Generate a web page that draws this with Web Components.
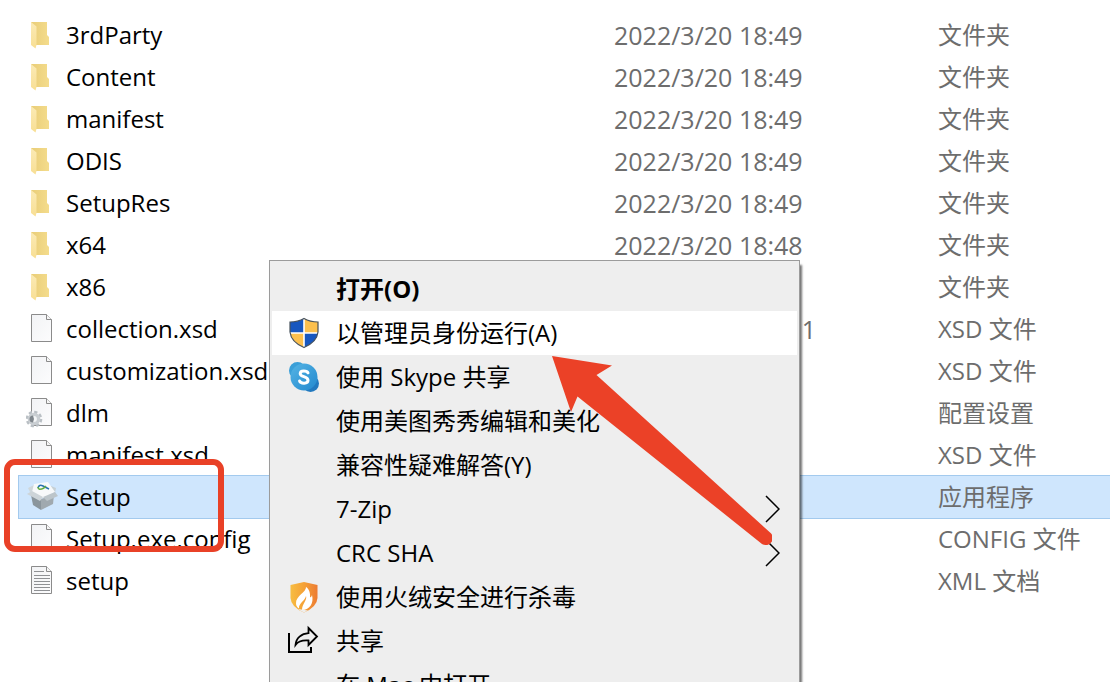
<!DOCTYPE html>
<html lang="zh-CN">
<head>
<meta charset="utf-8">
<title>Setup</title>
<style>
  html, body { margin: 0; height: 100%; }
  body {
    overflow: hidden;
    background: #fff;
    color: #000;
    font: 24px/42px "Open Sans", "Noto Sans CJK SC", sans-serif;
  }
</style>
</head>
<body>
<explorer-view>
  <context-menu slot="menu">
    <menu-entry strong>打开(O)</menu-entry>
    <menu-entry active icon="shield">以管理员身份运行(A)</menu-entry>
    <menu-entry icon="skype">使用 Skype 共享</menu-entry>
    <menu-entry>使用美图秀秀编辑和美化</menu-entry>
    <menu-entry>兼容性疑难解答(Y)</menu-entry>
    <menu-entry submenu>7-Zip</menu-entry>
    <menu-entry submenu>CRC SHA</menu-entry>
    <menu-entry icon="huorong">使用火绒安全进行杀毒</menu-entry>
    <menu-entry icon="share">共享</menu-entry>
    <menu-entry>在 Mac 中打开</menu-entry>
  </context-menu>
  <red-frame slot="notes"></red-frame>
  <red-arrow slot="notes"></red-arrow>
</explorer-view>

<script>
const page = `<linearGradient id="pg" x1="0" y1="0" x2="1" y2="1"><stop offset="0" stop-color="#f2f3f5"/><stop offset="1" stop-color="#fcfcfd"/></linearGradient>
  <path d="M5.5 1.5H20.5L25.500 6.5V28.500H5.500Z" fill="url(#pg)" stroke="#8b8b8b"/>
  <path d="M20.5 1.500V6.500H25.500" fill="#f6f6f6" stroke="#8b8b8b"/>`;

const ICONS = {
  folder: `<linearGradient id="fa" x1="0" x2="1"><stop offset="0" stop-color="#e9cd78"/><stop offset="1" stop-color="#f4dc8c"/></linearGradient>
    <linearGradient id="fb" x1="0" x2="0" y1="0" y2="1"><stop offset="0" stop-color="#fbeab5"/><stop offset="1" stop-color="#f8df94"/></linearGradient>
    <path d="M5 3H21V16L23 18V26H9Z" fill="url(#fa)"/>
    <path d="M5 3L10.500 7.500V26L9.500 29.500L5 26Z" fill="url(#fb)"/>`,
  page,
  text: page + `<path d="M8 6.500H18M8 10.500H24M8 13.500H24M8 16.500H24M8 19.500H24M8 22.500H24M8 25.500H24" stroke="#8f9194" fill="none"/>`,
  config: page + `<circle cx="8" cy="22" r="6.800" fill="none" stroke="#b9bfc4" stroke-width="3" stroke-dasharray="3.100 2.240"/>
    <circle cx="8" cy="22" r="4.600" fill="#f4f6f7" stroke="#c9ced2" stroke-width="3.400"/>
    <path d="M7 18.500A3.500 3.500 0 0 0 7 25.500L8 22Z" fill="#7f868c"/>`,
  setup: `<path d="M5 14L15 18V29L7 24Z" fill="#8a959c"/>
    <path d="M15 18L28 14L27 23L15 29Z" fill="#a0a9af"/>
    <path d="M2 7L8 4L9 10L4 11Z" fill="#cfd7db"/>
    <path d="M25 5L30 7L29 12L25 10Z" fill="#c6d0d5"/>
    <path d="M8 3L22 1L29 11L17 17L6 11Z" fill="#f7f9fa"/>
    <path d="M6 10L17 16L14 20L1 13Z" fill="#cdd4d8"/>
    <path d="M17 16L29 11L32 15L21 20Z" fill="#bcc5ca"/>
    <path d="M12 7Q13 3 17 5L23 8" fill="none" stroke="#2773b0" stroke-width="1.500"/>
    <path d="M12 6Q12 10 18 7L20 5" fill="none" stroke="#63ad42" stroke-width="1.500"/>`,
  shield: `<clipPath id="sh"><path d="M16 1.500Q22 5 30 5V15Q29 25 16 30.500Q3 25 2 15V5Q10 5 16 1.500Z"/></clipPath>
    <g clip-path="url(#sh)"><path d="M0 0H16V16H0ZM16 16H32V32H16Z" fill="#1757bf"/><path d="M16 0H32V16H16ZM0 16H16V32H0Z" fill="#fcc04e"/>
    <path d="M16 0V32M0 16H32" stroke="#fff" stroke-width="1.600"/></g>
    <path d="M16 1.500Q22 5 30 5V15Q29 25 16 30.500Q3 25 2 15V5Q10 5 16 1.500Z" fill="none" stroke="#47525c" stroke-width="1.200"/>`,
  skype: `<linearGradient id="sk" x1="0" y1="0" x2="1" y2="1"><stop offset="0" stop-color="#55b4e4"/><stop offset="1" stop-color="#2389cf"/></linearGradient>
    <circle cx="9.500" cy="9.500" r="8.500" fill="#3a9fd8"/><circle cx="22.500" cy="22.500" r="8.500" fill="#2279bf"/>
    <circle cx="16" cy="16" r="13.500" fill="url(#sk)"/>
    <path d="M20 11.800C19 9.600 12.200 9 12.200 12.700C12.200 16.300 20 15 20 19.200C20 23.200 12.600 22.800 11.600 20" fill="none" stroke="#fff" stroke-width="3" stroke-linecap="round"/>`,
  huorong: `<linearGradient id="hr" x1="0" x2="1"><stop offset="0" stop-color="#f7bd42"/><stop offset=".5" stop-color="#f5a136"/><stop offset="1" stop-color="#ec7b32"/></linearGradient>
    <path d="M16 1L29.500 4V17Q29 26 16 31.500Q3 26 2.500 17V4Z" fill="url(#hr)"/>
    <path d="M18 6C18.500 11 7.500 15 8 22.500C8 25 9.500 26.500 11 27.500C10.500 22 17 20 18 15C19.500 19 14 23 14 29C22 29 26 22 24 14C23.500 15.500 23 16 22 16.500C22.500 12 21 8 18 6Z" fill="#fff"/>
    <path d="M10 28Q13 30.500 16 31.500L20 29.500" fill="#eee"/>`,
  share: `<path d="M1 8V27H23V22" fill="none" stroke="#000" stroke-width="2"/>
    <path d="M20.500 3L29 11.500L20.500 20V15.500C14.500 15 10 16.500 7.500 20C8 13 13.500 8.700 20.500 8.200Z" fill="none" stroke="#000" stroke-width="1.800"/>`
};

class GlyphIcon extends HTMLElement {
  static observedAttributes = ["name"];
  constructor() { super(); this.attachShadow({ mode: "open" }); }
  attributeChangedCallback() {
    this.shadowRoot.innerHTML = `<style>
      :host { display: block; flex: none; width: 32px; height: 32px; }
      svg { display: block; width: 32px; height: 32px; }
    </style><svg viewBox="0 0 32 32" aria-hidden="true">${ICONS[this.getAttribute("name")] || ""}</svg>`;
  }
}
customElements.define("glyph-icon", GlyphIcon);

const D = "2022/3/20 18:49";
const FILES = [
  ["folder", "3rdParty", D, "文件夹"],
  ["folder", "Content", D, "文件夹"],
  ["folder", "manifest", D, "文件夹"],
  ["folder", "ODIS", D, "文件夹"],
  ["folder", "SetupRes", D, "文件夹"],
  ["folder", "x64", "2022/3/20 18:48", "文件夹"],
  ["folder", "x86", "", "文件夹"],
  ["page", "collection.xsd", "1", "XSD 文件"],
  ["page", "customization.xsd", "", "XSD 文件"],
  ["config", "dlm", "", "配置设置"],
  ["page", "manifest.xsd", "", "XSD 文件"],
  ["setup", "Setup", "", "应用程序"],
  ["page", "Setup.exe.config", "", "CONFIG 文件"],
  ["text", "setup", "", "XML 文档"]
];

class FileTable extends HTMLElement {
  constructor() {
    super();
    this.attachShadow({ mode: "open" }).innerHTML = `<style>
      :host { display: block; padding: 14px 0 0 19px; }
      table { width: 100%; border-collapse: separate; border-spacing: 0; table-layout: fixed; }
      td { height: 42px; padding: 0; white-space: nowrap; color: #6d6d6d; }
      td:first-child { color: #000; }
      td:nth-child(2) { font-size: 25px; }
      .c-name { width: 595px; }
      .c-date { width: 324px; }
      .name { display: flex; align-items: center; gap: 8px; padding-left: 7px; }
      .tail { display: block; width: 202px; text-align: right; }
      .selected { background: #cfe6fd; box-shadow: 0 0 0 1px #a3caee; }
    </style>
    <table><colgroup><col class="c-name"><col class="c-date"><col></colgroup><tbody>
    ${FILES.map(([icon, name, date, type]) => `<tr${icon === "setup" ? ' class="selected"' : ""}>
      <td><div class="name"><glyph-icon name="${icon}"></glyph-icon><span>${name}</span></div></td>
      <td>${date.length === 1 ? `<span class="tail">${date}</span>` : date}</td><td>${type}</td></tr>`).join("")}
    </tbody></table>`;
  }
}
customElements.define("file-table", FileTable);

class MenuEntry extends HTMLElement {
  constructor() {
    super();
    const icon = this.getAttribute("icon");
    this.attachShadow({ mode: "open" }).innerHTML = `<style>
      :host { display: block; }
      button { display: flex; align-items: center; gap: 16px; width: 100%; height: 44px; margin: 0;
        padding: 0 17px 0 16px; border: 0; background: none; color: #000; font: inherit; line-height: 44px;
        text-align: left; white-space: nowrap; }
      :host([active]) button { background: #fff; }
      :host([strong]) button { font-weight: 700; }
      .label { flex: 1; }
      .space { flex: none; width: 32px; }
      .chevron { flex: none; width: 15px; height: 28px; }
    </style>
    <button type="button" role="menuitem">
      ${icon ? `<glyph-icon name="${icon}"></glyph-icon>` : '<span class="space"></span>'}
      <span class="label"><slot></slot></span>
      ${this.hasAttribute("submenu") ? '<svg class="chevron" viewBox="0 0 15 28" aria-hidden="true"><path d="M1 1L14 14L1 27" fill="none" stroke="#000" stroke-width="1.500"/></svg>' : ""}
    </button>`;
  }
}
customElements.define("menu-entry", MenuEntry);

class ContextMenu extends HTMLElement {
  constructor() {
    super();
    this.attachShadow({ mode: "open" }).innerHTML = `<style>
      :host { display: block; position: absolute; left: 269px; top: 260px; width: 531px; box-sizing: border-box;
        padding: 6px 2px; border: 1px solid #9b9b9b; background: #eee; box-shadow: 2px 5px 2px rgba(0,0,0,.55); }
    </style><div role="menu"><slot></slot></div>`;
  }
}
customElements.define("context-menu", ContextMenu);

class RedFrame extends HTMLElement {
  constructor() {
    super();
    this.attachShadow({ mode: "open" }).innerHTML = `<style>
      :host { display: block; position: absolute; left: 4px; top: 459px; width: 220px; height: 93px;
        box-sizing: border-box; border: 6px solid #e94127; border-radius: 11px; }
    </style>`;
  }
}
customElements.define("red-frame", RedFrame);

class RedArrow extends HTMLElement {
  constructor() {
    super();
    this.attachShadow({ mode: "open" }).innerHTML = `<style>
      :host { display: block; position: absolute; left: 552px; top: 356px; width: 220px; height: 190px; }
      svg { display: block; width: 100%; height: 100%; }
    </style><svg viewBox="0 0 220 190" aria-hidden="true"><path fill="#eb4127" d="M0 0L60 9.500L44.500 19L217.500 176A7 7 0 0 1 210 188L25.500 40.500L19 56Z"/></svg>`;
  }
}
customElements.define("red-arrow", RedArrow);

class ExplorerView extends HTMLElement {
  constructor() {
    super();
    this.attachShadow({ mode: "open" }).innerHTML = `<style>
      :host { display: block; position: relative; min-height: 100vh; }
    </style>
    <file-table></file-table><slot name="menu"></slot><slot name="notes"></slot>`;
  }
}
customElements.define("explorer-view", ExplorerView);
</script>
</body>
</html>
